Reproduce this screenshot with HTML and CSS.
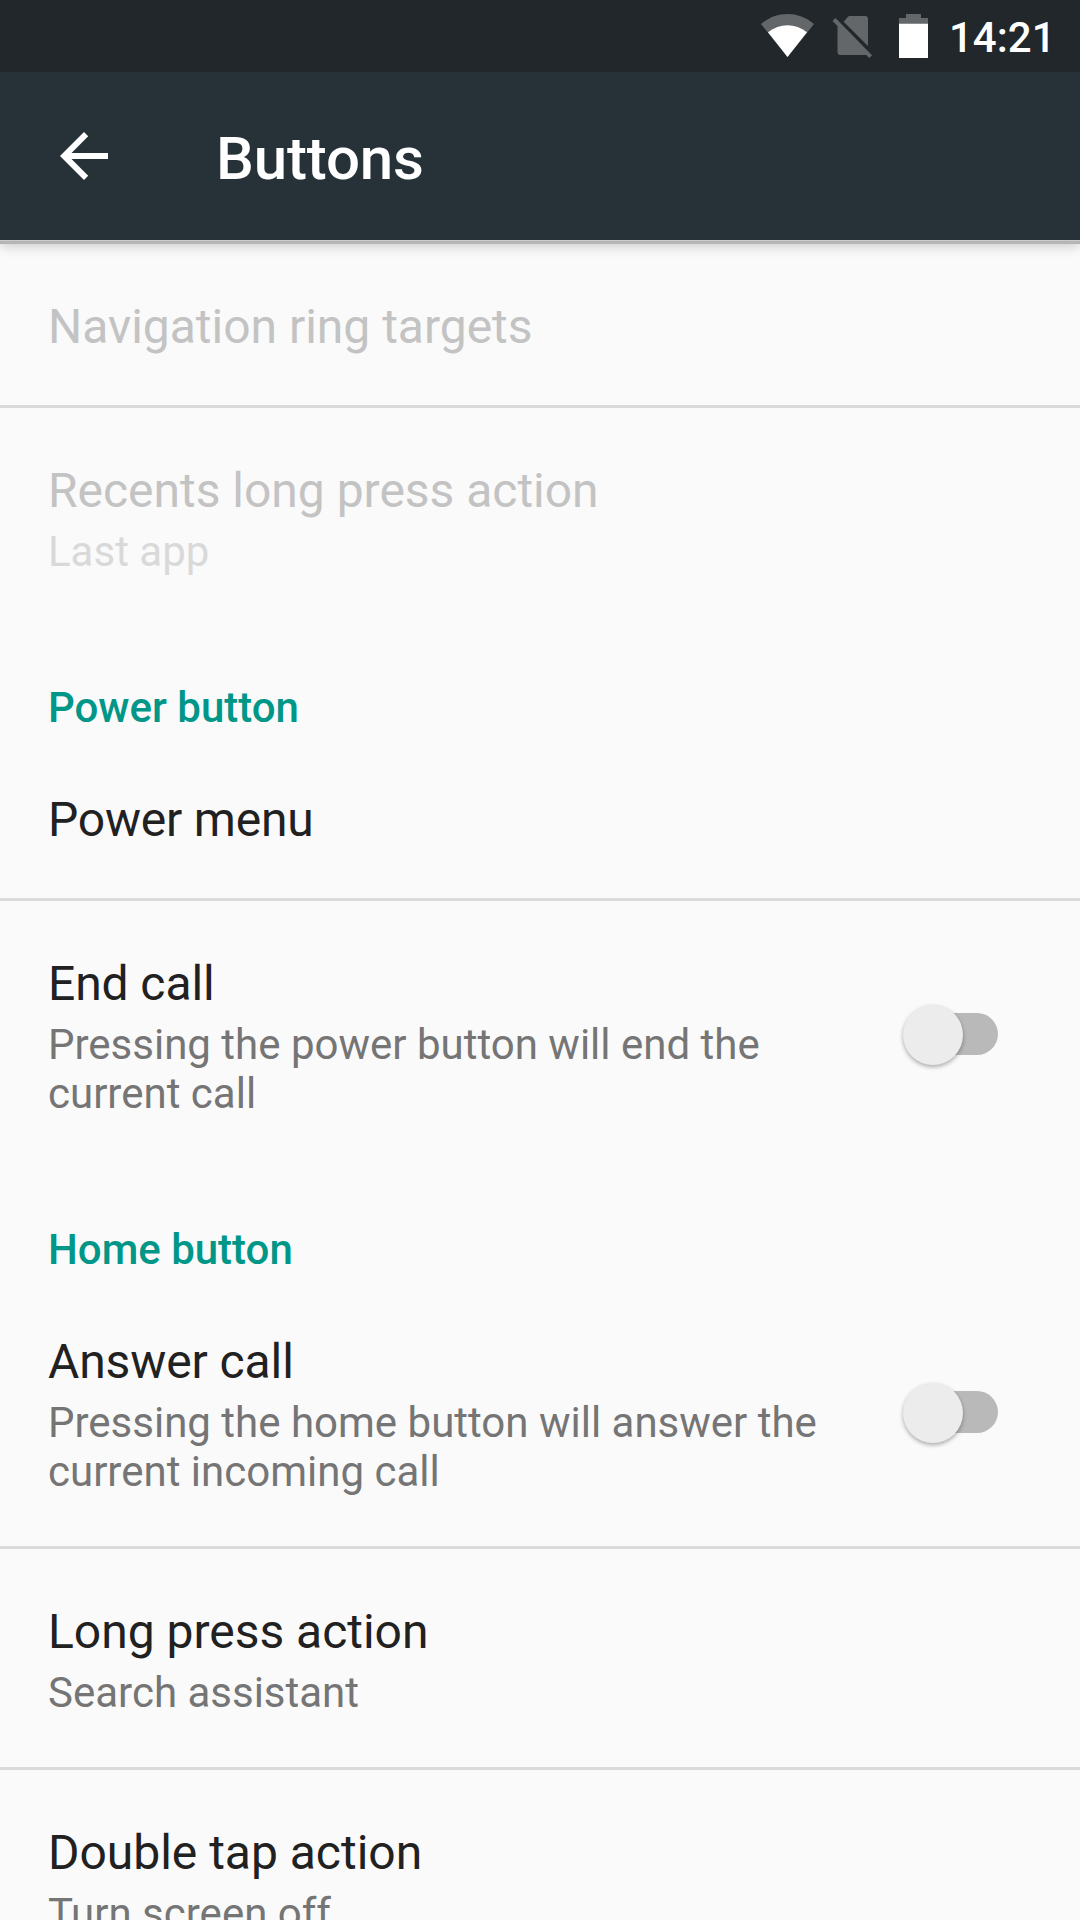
FILE: index.html
```html
<!DOCTYPE html>
<html lang="en">
<head>
<meta charset="utf-8">
<title>Buttons</title>
<link rel="stylesheet" href="styles.css">
</head>
<body>
<div class="status">
  <svg class="wifi" width="54" height="44" viewBox="0 0 54 44"><path d="M26.500 43 0 10C8 3.300 17 0 26.500 0S45 3.300 53 10z" fill="#646769"/><path d="M26.500 43 7 18.300C13 13.700 19.500 11.300 26.500 11.300s13.500 2.400 19.500 7z" fill="#fff"/></svg>
  <svg class="sim" width="40" height="46" viewBox="0 0 40 46"><path d="M11.700 7.700 16 2.700Q16.700 2 17.700 2H33a3 3 0 0 1 3 3v27zM.5 7 3.500 4 40 41.300 37.300 44 34 40.700Q33.500 41 32.500 41H8.500a3 3 0 0 1-3-3V12z" fill="#646769"/></svg>
  <svg class="battery" width="29" height="44" viewBox="0 0 29 44"><path d="M0 4h7V0h15v4h7v6H0z" fill="#646769"/><path d="M0 9.700h29V44H0z" fill="#fff"/></svg>
  <span class="clock">14:21</span>
</div>
<header class="toolbar">
  <svg class="back" width="48" height="48" viewBox="0 0 48 48"><path d="M48 21H11.500L28.200 4.200 24 0 0 24l24 24 4.200-4.200L11.500 27H48z" fill="#fff"/></svg>
  <h1>Buttons</h1>
</header>
<main>
  <section class="row single first disabled"><div class="title">Navigation ring targets</div></section>
  <section class="row disabled last"><div class="title">Recents long press action</div><div class="summary">Last app</div></section>
  <h2>Power button</h2>
  <section class="row single menu"><div class="title">Power menu</div></section>
  <section class="row toggle last"><div><div class="title">End call</div><div class="summary">Pressing the power button will end the<br>current call</div></div><span class="switch"></span></section>
  <h2>Home button</h2>
  <section class="row toggle"><div><div class="title">Answer call</div><div class="summary">Pressing the home button will answer the<br>current incoming call</div></div><span class="switch"></span></section>
  <section class="row"><div class="title">Long press action</div><div class="summary">Search assistant</div></section>
  <section class="row last"><div class="title">Double tap action</div><div class="summary">Turn screen off</div></section>
</main>
</body>
</html>
```
FILE: styles.css
```css
* { box-sizing: border-box; }
body { margin: 0; width: 1080px; height: 1920px; overflow: hidden; background: #fafafa; font-family: Roboto, sans-serif; color: #212121; display: flex; flex-direction: column; }
.status { height: 72px; flex: none; background: #21272b; display: flex; align-items: flex-start; padding-left: 761px; color: #fff; position: relative; z-index: 2; }
.status svg { flex: none; }
.wifi { margin: 14px 17px 0 0; }
.sim { margin: 14px 27px 0 0; }
.battery { margin: 14px 21px 0 0; }
.clock { font-size: 42px; font-weight: 500; line-height: 76px; }
.toolbar { height: 168px; flex: none; background: #263238; display: flex; align-items: center; padding-left: 60px; color: #fff; box-shadow: 0 1px 0 #cbcbcb, 0 4px 0 #b5b5b5, 0 6px 12px rgba(0,0,0,.2); position: relative; }
h1 { margin: 6px 0 0 108px; font-size: 60px; font-weight: 500; line-height: 70px; letter-spacing: -.15px; }
main { flex: none; }
.row { height: 221px; padding: 53px 48px 0; border-bottom: 3px solid #dadada; }
.title { font-size: 48px; line-height: 60px; letter-spacing: -.02px; }
.summary { font-size: 42px; line-height: 49px; margin-top: 6px; color: #757575; }
.single { height: 164px; }
.menu .title { letter-spacing: -.2px; }
.first { height: 168px; padding-top: 57px; }
.disabled .title { color: #c3c3c3; }
.disabled .summary { color: #d9d9d9; }
.last { border-bottom: 0; }
h2 { margin: 0; height: 108px; padding: 54px 48px 0; font-size: 42px; line-height: 50px; font-weight: 500; color: #009688; }
.toggle { display: flex; justify-content: space-between; height: 270px; }
.toggle .title { letter-spacing: -.1px; }
.switch { width: 96px; height: 60px; margin: 50px 34px 0 0; position: relative; }
.switch::before { content: ""; position: absolute; left: 28px; top: 9px; width: 68px; height: 42px; border-radius: 21px; background: #b9b9b9; }
.switch::after { content: ""; position: absolute; left: 0.5px; top: 0.5px; width: 60px; height: 60px; border-radius: 50%; background: #ececec; box-shadow: 0 2px 4px rgba(0,0,0,.32); }
```
